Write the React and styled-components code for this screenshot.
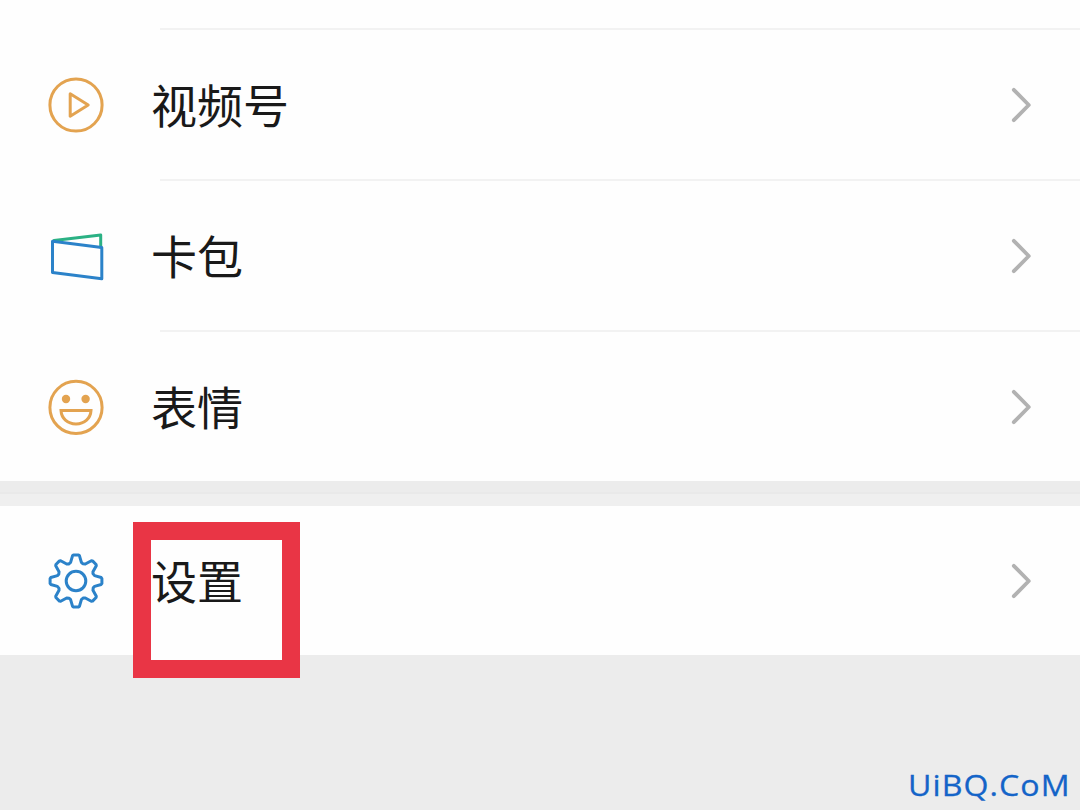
import React from 'react'
import styled, { createGlobalStyle } from 'styled-components'

const GlobalStyle = createGlobalStyle`
    body {
        margin: 0;
        background: #ececec;
        overflow: hidden;
    }
`;

const Page = styled.div`
    position: relative;
    width: 1080px;
    height: 810px;
    overflow: hidden;
    background: #ececec;
    font-family: "Noto Sans CJK SC", sans-serif;
`;

const MenuGroup = styled.div`
    background: #fefefe;
`;

const PreviousRow = styled.div`
    height: 28px;
`;

const Divider = styled.div`
    height: 2px;
    margin-left: 160px;
    background: #f2f2f2;
`;

const GroupGap = styled.div`
    border-bottom: 2px solid #e9e9e9;
    box-sizing: border-box;
    height: 13px;
    background: #ececec;
`;

const GroupGapLower = styled.div`
    height: 12px;
    background: #efefef;
`;

const MenuRow = styled.div`
    display: flex;
    align-items: center;
    box-sizing: border-box;
    height: 149px;
    padding: 1px 46px 0 46px;
`;

const RowIcon = styled.svg`
    flex: none;
    width: 60px;
    height: 60px;
    fill: none;
    stroke: ${({ $color }) => $color};
    stroke-width: 3;
    stroke-linejoin: round;
    stroke-linecap: round;
`;

const RowLabel = styled.span`
    position: relative;
    z-index: 1;
    flex: 1;
    margin-left: 45px;
    padding-bottom: 5px;
    font-size: 46px;
    line-height: 60px;
    color: #191919;
`;

const Arrow = styled.svg`
    flex: none;
    width: 26px;
    height: 40px;
    fill: none;
    stroke: #b2b2b2;
    stroke-width: 3.8;
    stroke-linecap: round;
    stroke-linejoin: round;
`;

const Highlight = styled.div`
    position: absolute;
    left: 133px;
    top: 522px;
    width: 167px;
    height: 156px;
    box-sizing: border-box;
    border: 18px solid #e93545;
    background: #fefefe;
`;

const Watermark = styled.div`
    position: absolute;
    left: 908px;
    top: 767px;
    font-family: "Open Sans", sans-serif;
    font-size: 30px;
    line-height: 36px;
    letter-spacing: 1px;
    white-space: nowrap;
    color: #1464c8;
    -webkit-text-stroke: 0.3px #1464c8;
    transform: scaleX(1.07);
    transform-origin: left center;
`;

const VideoIcon = () => (
    <RowIcon viewBox="-30 -30 60 60" $color="#e3a350">
        <circle r="26.1" />
        <path d="M-5.8 -11.2 L12.2 0 L-5.8 11.2 Z" />
    </RowIcon>
)

const CardsIcon = () => (
    <RowIcon viewBox="-30 -30 60 60" $color="#2b82c9">
        <path d="M-22 -15.4 L24.7 -21 V-8.8" stroke="#2bb184" />
        <path d="M-23.5 -14.8 L25.8 -8.4 V22.8 L-23.5 16.4 Z" />
    </RowIcon>
)

const StickerIcon = () => (
    <RowIcon viewBox="-30 -30 60 60" $color="#e3a350">
        <circle cy="0.4" r="26.1" />
        <circle cx="-10" cy="-8" r="4.2" fill="#e3a350" stroke="none" />
        <circle cx="9.6" cy="-8" r="4.2" fill="#e3a350" stroke="none" />
        <path d="M-15 3.4 H15 C14.6 11.4 8.6 16.9 0 16.9 S-14.6 11.4 -15 3.4 Z" strokeLinejoin="miter" />
    </RowIcon>
)

// one tooth plus the valley after it, turned 45 degrees for each of the 8
const gearPath = () => {
    const tooth = [[-5.4, -18.6], [-3.5, -25.2], [-2.5, -25.9], [2.5, -25.9], [3.5, -25.2], [5.4, -18.6], [6.8, -17.2]];
    const points = [];
    for (let i = 0; i < 8; i++) {
        const a = (i * Math.PI) / 4;
        tooth.forEach(([x, y]) => {
            points.push(`${(x * Math.cos(a) - y * Math.sin(a)).toFixed(2)} ${(x * Math.sin(a) + y * Math.cos(a)).toFixed(2)}`);
        });
    }
    return `M${points.join(' L')} Z`;
}

const SettingsIcon = () => (
    <RowIcon viewBox="-30 -30 60 60" $color="#2b82c9">
        <path d={gearPath()} />
        <circle r="9.8" />
    </RowIcon>
)

const Row = ({ icon, label }) => (
    <MenuRow>
        {icon}
        <RowLabel>{label}</RowLabel>
        <Arrow viewBox="0 0 26 40">
            <path d="M5.8 4.8 L20.8 20 L5.8 35.2" />
        </Arrow>
    </MenuRow>
)

const App = () => {
    return (
        <Page>
            <GlobalStyle />
            <MenuGroup>
                <PreviousRow />
                <Divider />
                <Row icon={<VideoIcon />} label="视频号" />
                <Divider />
                <Row icon={<CardsIcon />} label="卡包" />
                <Divider />
                <Row icon={<StickerIcon />} label="表情" />
            </MenuGroup>
            <GroupGap />
            <GroupGapLower />
            <MenuGroup>
                <Row icon={<SettingsIcon />} label="设置" />
            </MenuGroup>
            <Highlight />
            <Watermark>UiBQ.CoM</Watermark>
        </Page>
    )
}

export default App
